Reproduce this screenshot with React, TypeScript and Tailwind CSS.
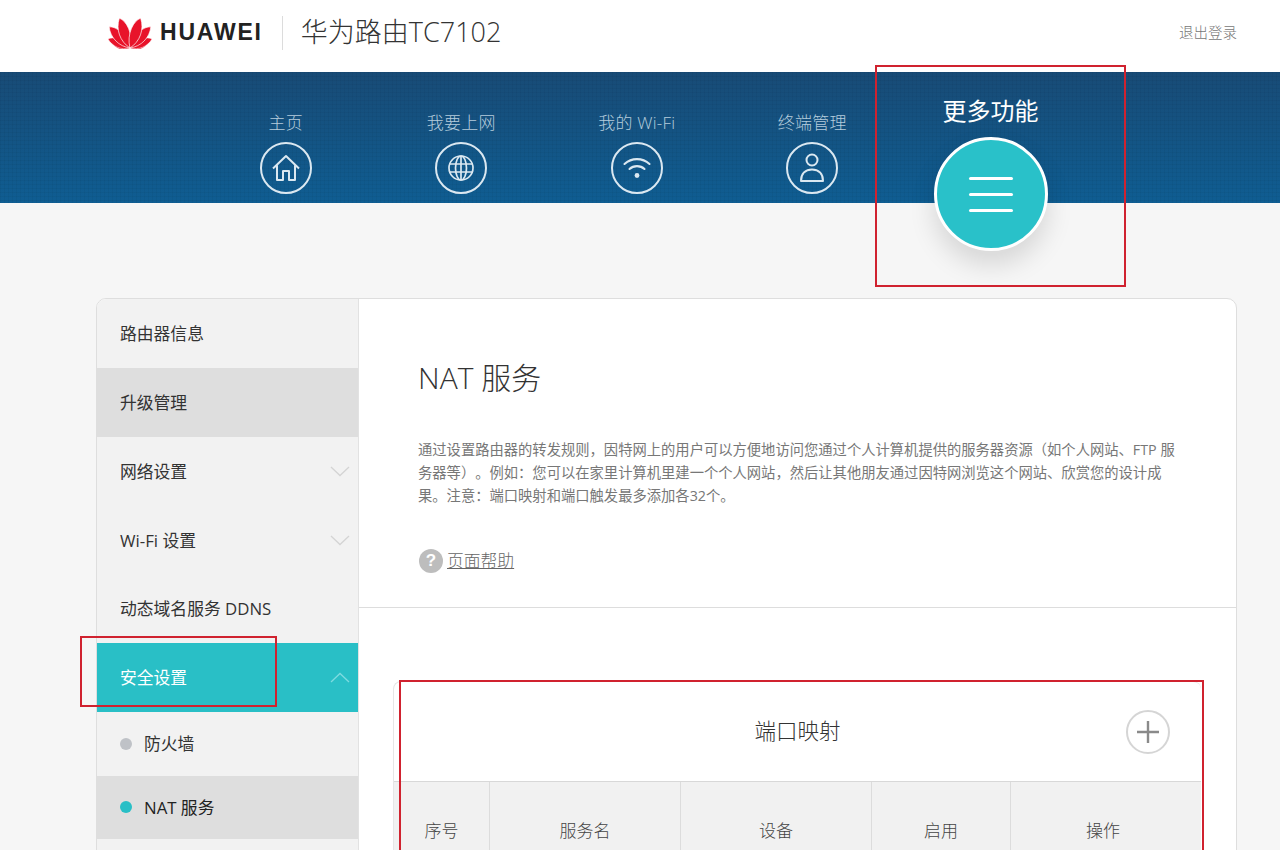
import React from "react";

function Logo() {
  const petals = [
    { r: -75, s: 0.65 },
    { r: 75, s: 0.65 },
    { r: -62, s: 0.95 },
    { r: 62, s: 0.95 },
    { r: -39, s: 1.18 },
    { r: 39, s: 1.18 },
    { r: -14, s: 1.26 },
    { r: 14, s: 1.26 },
  ];
  return (
    <svg width="44" height="33" viewBox="-22 -32 44 33" className="shrink-0">
      {petals.map((p, i) => (
        <path
          key={i}
          d="M0 0 C-6.5 -7 -7.5 -17 -2.5 -25 C2.5 -22 5.5 -10 0 0 Z"
          fill="#e8132a"
          stroke="#ffffff"
          strokeWidth="0.5"
          transform={`rotate(${p.r}) scale(${(p.r < 0 ? 1 : -1) * p.s},${p.s})`}
        />
      ))}
    </svg>
  );
}

const ring = "w-[52px] h-[52px] rounded-full border-2 border-[#dbe8f1] flex items-center justify-center";

function NavItem({ label, children }: { label: string; children: React.ReactNode }) {
  return (
    <div className="w-[175.5px] shrink-0 flex flex-col items-center">
      <div className="text-[17px] leading-[24px] h-[24px] text-[#b5ccdc] tracking-[0.2px] font-light">{label}</div>
      <div className={`${ring} mt-[7px]`}>{children}</div>
    </div>
  );
}

function Chevron({ up, color }: { up?: boolean; color: string }) {
  return (
    <svg width="20" height="11" viewBox="0 0 20 11" fill="none" stroke={color} strokeWidth="1.3">
      <polyline points={up ? "1,10 10,1.5 19,10" : "1,1 10,9.5 19,1"} />
    </svg>
  );
}

function SideItem({ label, bg, chevron }: { label: string; bg?: string; chevron?: boolean }) {
  return (
    <div className={`h-[68.8px] flex items-center justify-between pl-[23px] pr-2 pt-px text-[16.8px] text-[#333] ${bg ?? ""}`}>
      <span>{label}</span>
      {chevron && <Chevron color="#d4d4d4" />}
    </div>
  );
}

export default function App() {
  return (
    <div className="relative w-[1280px] h-[850px] overflow-hidden bg-[#f6f6f6] font-['Open_Sans','Noto_Sans_CJK_SC',sans-serif]">
      <header className="h-[72px] bg-white flex items-center pl-[108px] pr-[43px] pb-[7px]">
        <Logo />
        <span className="ml-[8px] text-[#222] text-[23px] font-bold tracking-[1.8px] font-['Liberation_Sans',sans-serif]">HUAWEI</span>
        <div className="ml-[19px] h-[34px] w-px bg-[#dcdcdc]" />
        <div className="ml-[18px] text-[27px] text-[#333] font-light">华为路由TC7102</div>
        <div className="ml-auto text-[14.5px] text-[#777] font-light">退出登录</div>
      </header>

      <section className="h-[131px] bg-[linear-gradient(rgba(0,0,0,0.035)_1px,transparent_1px),linear-gradient(90deg,rgba(0,0,0,0.035)_1px,transparent_1px),linear-gradient(to_bottom,#184b76,#0f5d92)] bg-[length:4px_4px,4px_4px,100%_100%] flex pl-[198px] pt-[39px]">
        <NavItem label="主页">
          <svg width="32" height="32" viewBox="0 0 32 32" fill="none" stroke="#dbe8f1" strokeWidth="2" strokeLinejoin="round">
            <path d="M3 16.5 L16 4 L29 16.5 M7 13.5 V28 H13 V19 H19 V28 H25 V13.5" />
          </svg>
        </NavItem>
        <NavItem label="我要上网">
          <svg width="28" height="28" viewBox="0 0 28 28" fill="none" stroke="#dbe8f1" strokeWidth="1.7">
            <circle cx="14" cy="14" r="12" />
            <ellipse cx="14" cy="14" rx="5.5" ry="12" />
            <path d="M2 10 H26 M2 18 H26 M14 2 V26" />
          </svg>
        </NavItem>
        <NavItem label="我的 Wi-Fi">
          <svg width="30" height="30" viewBox="0 0 30 30" fill="none" stroke="#dbe8f1" strokeWidth="2.1" strokeLinecap="round">
            <path d="M2.5 11 C9.5 4.5 20.5 4.5 27.5 11 M7.5 16 C11.5 12.2 18.5 12.2 22.5 16" />
            <circle cx="15" cy="22.5" r="2.4" fill="#dbe8f1" stroke="none" />
          </svg>
        </NavItem>
        <NavItem label="终端管理">
          <svg width="28" height="34" viewBox="0 0 28 34" fill="none" stroke="#dbe8f1" strokeWidth="2">
            <circle cx="14" cy="9" r="5.5" />
            <path d="M3 30 C3 22 8 18.5 14 18.5 C20 18.5 25 22 25 30 Z" strokeLinejoin="round" />
          </svg>
        </NavItem>
        <div className="w-[175px] shrink-0 -mt-[18px] ml-[3px] flex flex-col items-center">
          <div className="text-[24px] leading-[36px] text-white">更多功能</div>
          <div className="mt-[8px] w-[114px] h-[114px] rounded-full bg-[#29c1c9] border-[3px] border-white shadow-[0_14px_26px_rgba(0,0,0,0.13)] flex flex-col items-center justify-center gap-[13px] shrink-0">
            <div className="w-[44px] h-[3px] rounded-full bg-white" />
            <div className="w-[44px] h-[3px] rounded-full bg-white" />
            <div className="w-[44px] h-[3px] rounded-full bg-white" />
          </div>
        </div>
      </section>

      <div className="pl-[96px] pr-[43px] pt-[95px]">
        <div className="flex h-[700px] rounded-t-[10px] border border-[#dedede] overflow-hidden bg-white">
          <aside className="w-[262px] shrink-0 bg-[#f2f2f2] border-r border-[#e2e2e2]">
            <SideItem label="路由器信息" />
            <SideItem label="升级管理" bg="bg-[#dedede]" />
            <SideItem label="网络设置" chevron />
            <SideItem label="Wi-Fi 设置" chevron />
            <SideItem label="动态域名服务 DDNS" />
            <div className="h-[68.8px] flex items-center justify-between pl-[23px] pr-2 pt-px text-[16.8px] text-white bg-[#29bfc6]">
              <span>安全设置</span>
              <Chevron up color="#7edbe0" />
            </div>
            <div className="h-[64px] flex items-center pl-[23px] gap-[12px] text-[16.8px] text-[#333]">
              <span className="w-[12px] h-[12px] rounded-full bg-[#bfc2c7]" />
              <span>防火墙</span>
            </div>
            <div className="h-[63px] flex items-center pl-[23px] gap-[12px] text-[16.8px] text-[#222] bg-[#dedede]">
              <span className="w-[12px] h-[12px] rounded-full bg-[#29bfc6]" />
              <span>NAT 服务</span>
            </div>
          </aside>

          <main className="flex-1 min-w-0">
            <div className="h-[309px] border-b border-[#dddddd] pl-[59px] pr-[56px] pt-[56px]">
              <h1 className="text-[30px] leading-[46px] text-[#333] font-light">NAT 服务</h1>
              <p className="mt-[37px] text-[14.3px] leading-[23px] text-[#777] [text-spacing-trim:space-all]">
                通过设置路由器的转发规则，因特网上的用户可以方便地访问您通过个人计算机提供的服务器资源（如个人网站、FTP 服务器等）。例如：您可以在家里计算机里建一个个人网站，然后让其他朋友通过因特网浏览这个网站、欣赏您的设计成果。注意：端口映射和端口触发最多添加各32个。
              </p>
              <div className="mt-[41px] flex items-center gap-[4px]">
                <span className="ml-px w-[24px] h-[24px] rounded-full bg-[#bdbdbd] text-white text-[17px] leading-[24px] font-bold text-center font-['Liberation_Sans',sans-serif]">?</span>
                <span className="text-[16.8px] text-[#666] underline font-light">页面帮助</span>
              </div>
            </div>
            <div className="ml-[34px] mr-[35px] mt-[73px] rounded-t-[8px] border-t border-l border-[#e6e6e6]">
              <div className="relative h-[100px] flex items-center justify-center border-b border-[#d8d8d8] text-[21.5px] text-[#333] font-light">
                端口映射
                <span className="absolute right-[31px] top-[28px] w-[44px] h-[44px] rounded-full border-2 border-[#d5d5d5] flex items-center justify-center">
                  <svg width="24" height="24" viewBox="0 0 24 24" stroke="#8a8a8a" strokeWidth="2.4">
                    <path d="M12 1 V23 M1 12 H23" />
                  </svg>
                </span>
              </div>
              <div className="h-[100px] bg-[#f1f1f1] grid grid-cols-[95px_191px_191px_139px_191px] text-[17px] text-[#444] font-light">
                <div className="pt-[36px] text-center">序号</div>
                <div className="pt-[36px] text-center border-l border-[#dcdcdc]">服务名</div>
                <div className="pt-[36px] text-center border-l border-[#dcdcdc]">设备</div>
                <div className="pt-[36px] text-center border-l border-[#dcdcdc]">启用</div>
                <div className="pt-[36px] pr-[6px] text-center border-l border-[#dcdcdc]">操作</div>
              </div>
            </div>
          </main>
        </div>
      </div>

      <div className="absolute left-[875px] top-[65px] w-[251px] h-[222px] border-2 border-[#d0222f]" />
      <div className="absolute left-[80px] top-[636px] w-[197px] h-[71px] border-2 border-[#d0222f]" />
      <div className="absolute left-[399px] top-[680px] w-[805px] h-[200px] border-2 border-[#d0222f]" />
    </div>
  );
}
